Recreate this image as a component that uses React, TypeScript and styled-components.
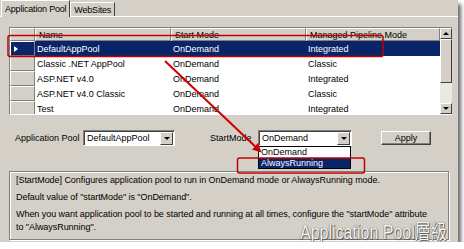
import { Fragment } from "react";
import styled, { createGlobalStyle } from "styled-components";

const GlobalStyle = createGlobalStyle`
  html, body {
    margin: 0;
    padding: 0;
    background: #ffffff;
  }
  body {
    font-family: "Liberation Sans", Arial, sans-serif;
    font-size: 9px;
    color: #000;
  }
`;

const Window = styled.div`
  position: relative;
  width: 458px;
  height: 242px;
  background: #d4d0c8;
  display: flex;
  flex-direction: column;
  box-shadow: 3px 4px 4px rgba(0, 0, 0, 0.6);
  overflow: hidden;
`;

const TabStrip = styled.div`
  height: 16px;
  display: flex;
  align-items: flex-end;
  padding-left: 1px;
  border-bottom: 1px solid #ffffff;
`;

const Tab = styled.div<{ active?: boolean }>`
  height: ${(p) => (p.active ? "17px" : "14px")};
  margin-bottom: ${(p) => (p.active ? "-1px" : "0")};
  padding: 0 3px;
  display: flex;
  align-items: center;
  background: #d4d0c8;
  border-left: 1px solid #ffffff;
  border-top: 1px solid #ffffff;
  border-right: 1px solid #404040;
  box-sizing: border-box;
  font-size: 9px;
  letter-spacing: -0.2px;
`;

const Page = styled.div`
  padding: 10px 0 0 9px;
  display: flex;
  flex-direction: column;
`;

const Grid = styled.div`
  width: 443px;
  height: 88px;
  display: flex;
  box-sizing: border-box;
  border-top: 1px solid #808080;
  border-left: 1px solid #808080;
  border-bottom: 1px solid #ffffff;
  background: #ffffff;
`;

const Table = styled.div`
  flex: 1;
  display: grid;
  grid-template-columns: 25px 136px 135px 134px;
  grid-auto-rows: 15px;
  grid-template-rows: 13px;
  align-content: start;
  overflow: hidden;
`;

const HeaderCell = styled.div`
  background: #d4d0c8;
  border-top: 1px solid #ffffff;
  border-left: 1px solid #ffffff;
  border-right: 1px solid #808080;
  border-bottom: 1px solid #808080;
  box-sizing: border-box;
  padding-left: 3px;
  display: flex;
  align-items: center;
  white-space: nowrap;
`;

const RowHead = styled.div<{ selected?: boolean }>`
  background: ${(p) => (p.selected ? "#0a246a" : "#d4d0c8")};
  border-top: 1px solid #ffffff;
  border-left: 1px solid #ffffff;
  border-right: 1px solid #808080;
  border-bottom: 1px solid #808080;
  box-sizing: border-box;
  display: flex;
  align-items: center;
  padding-left: 3px;
`;

const Pointer = styled.div`
  width: 0;
  height: 0;
  border-top: 3px solid transparent;
  border-bottom: 3px solid transparent;
  border-left: 4px solid #ffffff;
`;

const Cell = styled.div<{ selected?: boolean }>`
  background: ${(p) => (p.selected ? "#0a246a" : "#ffffff")};
  color: ${(p) => (p.selected ? "#ffffff" : "#000000")};
  display: flex;
  align-items: center;
  padding-left: 2px;
  white-space: nowrap;
`;

const ScrollBar = styled.div`
  width: 12px;
  display: flex;
  flex-direction: column;
  background: #ece9e2;
`;

const ScrollButton = styled.div`
  height: 11px;
  background: #d4d0c8;
  border-top: 1px solid #ffffff;
  border-left: 1px solid #ffffff;
  border-right: 1px solid #404040;
  border-bottom: 1px solid #404040;
  box-sizing: border-box;
  display: flex;
  align-items: center;
  justify-content: center;
`;

const Thumb = styled(ScrollButton)`
  height: 44px;
`;

const Track = styled.div`
  flex: 1;
`;

const Tri = styled.div<{ up?: boolean }>`
  width: 0;
  height: 0;
  border-left: 3px solid transparent;
  border-right: 3px solid transparent;
  ${(p) =>
    p.up ? "border-bottom: 3px solid #000;" : "border-top: 3px solid #000;"}
`;

const FormRow = styled.div`
  margin-top: 15px;
  height: 16px;
  display: flex;
  align-items: center;
`;

const Label = styled.div<{ width: number; indent: number }>`
  width: ${(p) => p.width}px;
  margin-left: ${(p) => p.indent}px;
  white-space: nowrap;
`;

const Combo = styled.div<{ width: number }>`
  position: relative;
  width: ${(p) => p.width}px;
  height: 16px;
  box-sizing: border-box;
  background: #ffffff;
  border-top: 1px solid #808080;
  border-left: 1px solid #808080;
  border-right: 1px solid #ffffff;
  border-bottom: 1px solid #ffffff;
  box-shadow: inset 1px 1px 0 #404040;
  display: flex;
  align-items: center;
  padding-left: 3px;
`;

const ComboText = styled.div`
  flex: 1;
  white-space: nowrap;
`;

const DropButton = styled(ScrollButton)`
  width: 13px;
  height: 13px;
  margin-right: 1px;
`;

const DropList = styled.div`
  position: absolute;
  left: -1px;
  top: 15px;
  width: calc(100% + 1px);
  box-sizing: border-box;
  background: #ffffff;
  border: 1px solid #000000;
  display: flex;
  flex-direction: column;
  z-index: 2;
`;

const Option = styled.div<{ selected?: boolean }>`
  height: 10.5px;
  display: flex;
  align-items: center;
  padding-left: 2px;
  background: ${(p) => (p.selected ? "#0a246a" : "#ffffff")};
  color: ${(p) => (p.selected ? "#ffffff" : "#000000")};
`;

const Button = styled.div`
  margin-left: 29px;
  width: 50px;
  height: 14px;
  box-sizing: border-box;
  background: #d4d0c8;
  border-top: 1px solid #ffffff;
  border-left: 1px solid #ffffff;
  border-right: 1px solid #404040;
  border-bottom: 1px solid #404040;
  box-shadow: inset -1px -1px 0 #808080;
  display: flex;
  align-items: center;
  justify-content: center;
`;

const Group = styled.div`
  margin-top: 25px;
  width: 440px;
  height: 69px;
  box-sizing: border-box;
  border: 1px solid #808080;
  box-shadow: inset 1px 1px 0 #ffffff, 1px 1px 0 #ffffff;
  padding: 2px 6px;
`;

const Para = styled.p`
  margin: 0 0 4px 0;
  line-height: 13px;
  white-space: nowrap;
  letter-spacing: -0.05px;
`;

const Overlay = styled.svg`
  position: absolute;
  left: 0;
  top: 0;
  pointer-events: none;
  z-index: 3;
`;

const Watermark = styled.div`
  position: absolute;
  left: 300px;
  top: 216px;
  font-family: "Liberation Sans", "Noto Sans CJK TC", sans-serif;
  font-size: 20px;
  color: #f6f6f6;
  transform: scaleX(0.8);
  transform-origin: left top;
  white-space: nowrap;
  text-shadow: 0 0 1px #333, 1px 1px 1px #555;
  z-index: 4;
`;

const rows = [
  ["DefaultAppPool", "OnDemand", "Integrated"],
  ["Classic .NET AppPool", "OnDemand", "Classic"],
  ["ASP.NET v4.0", "OnDemand", "Integrated"],
  ["ASP.NET v4.0 Classic", "OnDemand", "Classic"],
  ["Test", "OnDemand", "Integrated"],
];

const App = () => {
  return (
    <>
      <GlobalStyle />
      <Window>
        <TabStrip>
          <Tab active>Application Pool</Tab>
          <Tab>WebSites</Tab>
        </TabStrip>
        <Page>
          <Grid>
            <Table>
              <HeaderCell />
              <HeaderCell>Name</HeaderCell>
              <HeaderCell>Start Mode</HeaderCell>
              <HeaderCell>Managed Pipeline Mode</HeaderCell>
              {rows.map((r, i) => (
                <Fragment key={i}>
                  <RowHead selected={i === 0}>
                    {i === 0 && <Pointer />}
                  </RowHead>
                  {r.map((c, j) => (
                    <Cell key={j} selected={i === 0}>
                      {c}
                    </Cell>
                  ))}
                </Fragment>
              ))}
            </Table>
            <ScrollBar>
              <ScrollButton>
                <Tri up />
              </ScrollButton>
              <Thumb />
              <Track />
              <ScrollButton>
                <Tri />
              </ScrollButton>
            </ScrollBar>
          </Grid>
          <FormRow>
            <Label width={68} indent={6}>Application Pool</Label>
            <Combo width={92}>
              <ComboText>DefaultAppPool</ComboText>
              <DropButton>
                <Tri />
              </DropButton>
            </Combo>
            <Label width={48} indent={35}>StartMode</Label>
            <Combo width={94}>
              <ComboText>OnDemand</ComboText>
              <DropButton>
                <Tri />
              </DropButton>
              <DropList>
                <Option>OnDemand</Option>
                <Option selected>AlwaysRunning</Option>
              </DropList>
            </Combo>
            <Button>Apply</Button>
          </FormRow>
          <Group>
            <Para>
              [StartMode] Configures application pool to run in OnDemand mode
              or AlwaysRunning mode.
            </Para>
            <Para>Default value of "startMode" is "OnDemand".</Para>
            <Para>
              When you want application pool to be started and running at all
              times, configure the "startMode" attribute
              <br />
              to "AlwaysRunning".
            </Para>
          </Group>
        </Page>
        <Overlay width="458" height="242" viewBox="0 0 458 242">
          <defs>
            <marker
              id="head"
              markerWidth="9"
              markerHeight="9"
              refX="7"
              refY="4.5"
              orient="auto"
              markerUnits="userSpaceOnUse"
            >
              <path d="M0,0 L9,4.5 L0,9 z" fill="#cc0000" />
            </marker>
          </defs>
          <rect x="8" y="35.5" width="375" height="21" rx="2" fill="none" stroke="#c00000" strokeWidth="1.5" />
          <rect x="237.5" y="158" width="127" height="15" rx="2" fill="none" stroke="#c00000" strokeWidth="1.5" />
          <line x1="165" y1="61" x2="260" y2="151" stroke="#cc0000" strokeWidth="2" markerEnd="url(#head)" />
        </Overlay>
        <Watermark>Application Pool層級</Watermark>
      </Window>
    </>
  );
};

export default App;
